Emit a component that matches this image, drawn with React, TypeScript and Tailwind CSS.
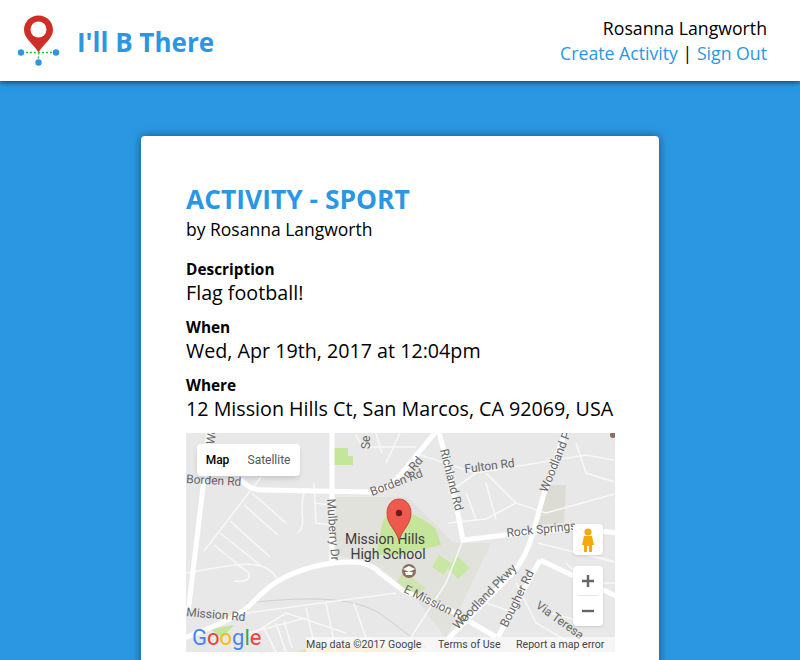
const OPEN_SANS = { fontFamily: '"Open Sans", sans-serif' };

const MAJOR_ROADS = [
  "M54 46 C62 54 66 57 78 57 L184 59 C200 56 208 50 216 40 L252 -4",
  "M-4 206 C20 196 40 190 58 177 C72 166 78 156 92 148 C112 136 140 129 164 129 C178 129 186 132 194 140 L218 158 L264 177 L310 204",
  "M2 180 L18 46 L23 -4",
  "M146 -4 L146 130",
  "M252 -4 L264 40 L277 107 L320 102 L387 95 L432 100",
  "M380 -4 L357 64 L347 100 C342 118 336 130 325 142 L262 206",
  "M354 127 L432 164",
  "M354 127 L312 204",
];

const MINOR_ROADS = [
  "M18 118 L75 44 M28 112 L60 138 M34 100 L74 132 M44 88 L84 124 M58 72 L92 102 M66 60 L100 90",
  "M118 60 C112 80 122 90 112 100 M128 50 L130 90 L146 92 M128 70 L146 72",
  "M0 140 C40 134 80 120 92 148 M50 132 C70 140 66 150 48 148",
  "M60 180 L210 160 M60 205 L100 180 L160 200 M90 190 L100 219 M120 175 L130 219 M140 170 L150 219 M168 170 L180 205 L240 219",
  "M228 20 L290 40 L400 22 L432 28 M262 60 L290 40 M300 40 L330 70 L300 86 L262 90 M280 60 L290 86 M300 50 L310 86",
  "M277 107 L260 150 L224 206",
  "M330 70 L360 80 M352 110 L432 130 M360 80 L432 60 M390 10 L400 40 L432 50",
  "M300 170 L330 180 M330 150 L350 190 L400 219 M365 180 L400 190 M400 120 L432 130 M380 130 L400 150 L432 150",
  "M214 0 L200 30 M190 0 L196 20 M170 2 L176 14 L230 14",
  "M62 200 L120 185 M78 195 L90 219 M98 188 L106 215",
];

const MAP_LABELS = [
  { text: "Borden Rd", x: 0, y: 50, rotate: 3 },
  { text: "Borden Rd", x: 186, y: 63, rotate: -21 },
  { text: "Mulberry Dr", x: 141, y: 66, rotate: 86 },
  { text: "Richland Rd", x: 254, y: 17, rotate: 76 },
  { text: "Fulton Rd", x: 279, y: 40, rotate: -7 },
  { text: "Rock Springs", x: 321, y: 104, rotate: -6 },
  { text: "Woodland Pkwy", x: 272, y: 197, rotate: -46 },
  { text: "Woodland P", x: 361, y: 60, rotate: -68 },
  { text: "Bougher Rd", x: 321, y: 195, rotate: -64 },
  { text: "Via Teresa", x: 349, y: 174, rotate: 36 },
  { text: "Mission Rd", x: 0, y: 183, rotate: 5 },
  { text: "E Mission Rd", x: 217, y: 159, rotate: 26 },
  { text: "Se", x: 184, y: 16, rotate: -90 },
  { text: "Wo", x: 28, y: 12, rotate: -80 },
  { text: "n Rd", x: 222, y: 46, rotate: -50 },
];

function Logo() {
  return (
    <svg width="46" height="54" viewBox="0 0 46 54" className="shrink-0">
      <path
        d="M22.5 1.5 C14 1.5 8 8 8 16 C8 25 18 30 22.5 38.5 C27 30 37 25 37 16 C37 8 31 1.5 22.5 1.5 Z"
        fill="#cf2e27"
      />
      <circle cx="22.5" cy="15.5" r="8" fill="#fff" />
      <path d="M6 38.5 L40 38.5 M22.5 38.5 L22.5 46" stroke="#2fc42f" strokeWidth="1.6" strokeDasharray="2 2" />
      <circle cx="5" cy="38.5" r="3.2" fill="#2b97e3" />
      <circle cx="40" cy="38.5" r="3.2" fill="#2b97e3" />
      <circle cx="22.5" cy="48.5" r="3.2" fill="#2b97e3" />
    </svg>
  );
}

function MapCanvas() {
  return (
    <svg viewBox="0 0 429 219" width="429" height="219" className="absolute inset-0">
      <rect width="429" height="219" fill="#e8e8e8" />
      <path d="M150 64 L222 64 L268 110 L305 110 L260 205 L222 156 L190 132 L150 122 Z" fill="#e2e2dd" />
      <path d="M360 52 L380 52 L378 90 L352 92 Z" fill="#dddcd4" />
      <path d="M148 15 L162 15 L162 23 L167 23 L167 32 L148 32 Z" fill="#c5e59b" />
      <path d="M196 92 C200 70 230 78 250 96 L255 112 L215 122 L190 122 Z" fill="#c5e59b" />
      <path d="M253 122 L265 130 L258 142 L246 134 Z M270 122 L284 135 L272 146 L262 136 Z" fill="#c9e7a4" />
      <path d="M218 138 L240 155 L226 165 L210 150 Z" fill="#d0e4b2" />
      <path d="M24 196 L48 192 L36 205 Z" fill="#c5e59b" />
      <path d="M112 219 L126 213 L170 213 L240 219 Z" fill="#f6d9a6" />
      <path d="M60 170 C110 165 170 160 200 185 L240 215" fill="none" stroke="#cfcfcf" strokeWidth="1" />
      {MINOR_ROADS.map((d) => (
        <path key={d} d={d} fill="none" stroke="#f7f7f7" strokeWidth="1.6" />
      ))}
      {MAJOR_ROADS.map((d) => (
        <path key={d} d={d} fill="none" stroke="#fff" strokeWidth="5" strokeLinejoin="round" />
      ))}
      <g fontFamily="Roboto, sans-serif" fontSize="12" fill="#666">
        {MAP_LABELS.map((l) => (
          <text key={l.text + l.x} x={l.x} y={l.y} transform={`rotate(${l.rotate} ${l.x} ${l.y})`}>
            {l.text}
          </text>
        ))}
      </g>
      <g fontFamily="Roboto, sans-serif" fontSize="14" fill="#3c3c3c" textAnchor="middle">
        <text x="199" y="111">Mission Hills</text>
        <text x="202" y="126">High School</text>
      </g>
      <circle cx="223" cy="138" r="7" fill="#8d6e63" />
      <path d="M217 136 L223 133 L229 136 L223 139 Z M219 139 L227 139 L226 142 L220 142 Z" fill="#fff" />
      <circle cx="427" cy="2" r="3" fill="#8d6e63" />
      <path
        d="M213 108 C210 96 201 92 201 80 C201 72 206 66 213 66 C220 66 225 72 225 80 C225 92 216 96 213 108 Z"
        fill="#ee5a4e"
        stroke="#b93a30"
        strokeWidth="0.8"
      />
      <circle cx="213" cy="80" r="3.2" fill="#6d1c16" />
      <text x="6" y="212" fontFamily="Roboto, sans-serif" fontSize="22">
        <tspan fill="#4285f4">G</tspan>
        <tspan fill="#ea4335">o</tspan>
        <tspan fill="#fbbc05">o</tspan>
        <tspan fill="#4285f4">g</tspan>
        <tspan fill="#34a853">l</tspan>
        <tspan fill="#ea4335">e</tspan>
      </text>
    </svg>
  );
}

function MapControls() {
  return (
    <>
      <div className="absolute left-[11px] top-[11px] flex h-[32px] rounded-sm bg-white text-[12px] shadow-md" style={{ fontFamily: "Roboto, sans-serif" }}>
        <span className="flex w-[41px] items-center justify-center font-medium text-black">Map</span>
        <span className="flex w-[62px] items-center justify-center text-[#565656]">Satellite</span>
      </div>
      <div className="absolute left-[387px] top-[91px] flex h-[31px] w-[30px] items-center justify-center rounded-sm bg-white shadow-sm">
        <svg width="14" height="24" viewBox="0 0 14 24">
          <circle cx="7" cy="4" r="3.6" fill="#f5a90c" />
          <path d="M3 8 L11 8 L13 17 L11 17 L11 24 L8 24 L8 18 L6 18 L6 24 L3 24 L3 17 L1 17 Z" fill="#f5a90c" />
        </svg>
      </div>
      <div className="absolute left-[387px] top-[133px] flex h-[60px] w-[30px] flex-col items-center rounded-sm bg-white shadow-sm">
        <div className="flex h-[29px] w-full items-center justify-center">
          <svg width="12" height="12" viewBox="0 0 12 12">
            <path d="M6 0 V12 M0 6 H12" stroke="#666" strokeWidth="2.4" />
          </svg>
        </div>
        <div className="h-px w-[20px] bg-[#e6e6e6]" />
        <div className="flex h-[30px] w-full items-center justify-center">
          <svg width="12" height="12" viewBox="0 0 12 12">
            <path d="M0 6 H12" stroke="#666" strokeWidth="2.4" />
          </svg>
        </div>
      </div>
      <div className="absolute bottom-0 right-0 flex h-[15px] w-[309px] items-center bg-white/60 text-[10.6px] text-[#444]" style={{ fontFamily: "Roboto, sans-serif" }}>
        <span className="w-[132px] whitespace-nowrap">Map data ©2017 Google</span>
        <span className="w-[78px] whitespace-nowrap">Terms of Use</span>
        <span className="whitespace-nowrap">Report a map error</span>
      </div>
    </>
  );
}

function Field({ label, value }: { label: string; value: string }) {
  return (
    <div className="mt-[12px] first:mt-[19px]">
      <div className="text-[15.4px] font-bold leading-[20px] text-black">{label}</div>
      <div className="whitespace-nowrap text-[19.7px] leading-[26px] text-black">{value}</div>
    </div>
  );
}

export default function App() {
  return (
    <div className="h-screen overflow-hidden bg-[#2b97e3]" style={OPEN_SANS}>
      <header className="relative flex h-[81px] items-center justify-between bg-white pl-[16px] pr-[33px] shadow-[0_2px_5px_rgba(0,0,0,0.5)]">
        <div className="flex items-center gap-[15px]">
          <Logo />
          <span className="pt-[2px] text-[26px] font-bold leading-none text-[#2b97e3]">I'll B There</span>
        </div>
        <div className="text-right text-[17.7px] leading-[25px]">
          <div className="text-black">Rosanna Langworth</div>
          <div className="text-[#2b97e3]">
            Create Activity <span className="text-black">|</span> Sign Out
          </div>
        </div>
      </header>
      <main className="mx-auto mt-[55px] w-[518px] rounded bg-white px-[45px] pb-[40px] pt-[45px] shadow-[0_0_10px_rgba(0,0,0,0.45)]">
        <h1 className="text-[26.4px] font-bold leading-[36px] text-[#2b97e3]">ACTIVITY - SPORT</h1>
        <p className="text-[17.5px] leading-[24px] text-black">by Rosanna Langworth</p>
        <div>
          <Field label="Description" value="Flag football!" />
          <Field label="When" value="Wed, Apr 19th, 2017 at 12:04pm" />
          <Field label="Where" value="12 Mission Hills Ct, San Marcos, CA 92069, USA" />
        </div>
        <div className="relative mt-[11px] h-[219px] w-[429px] overflow-hidden">
          <MapCanvas />
          <MapControls />
        </div>
      </main>
    </div>
  );
}
